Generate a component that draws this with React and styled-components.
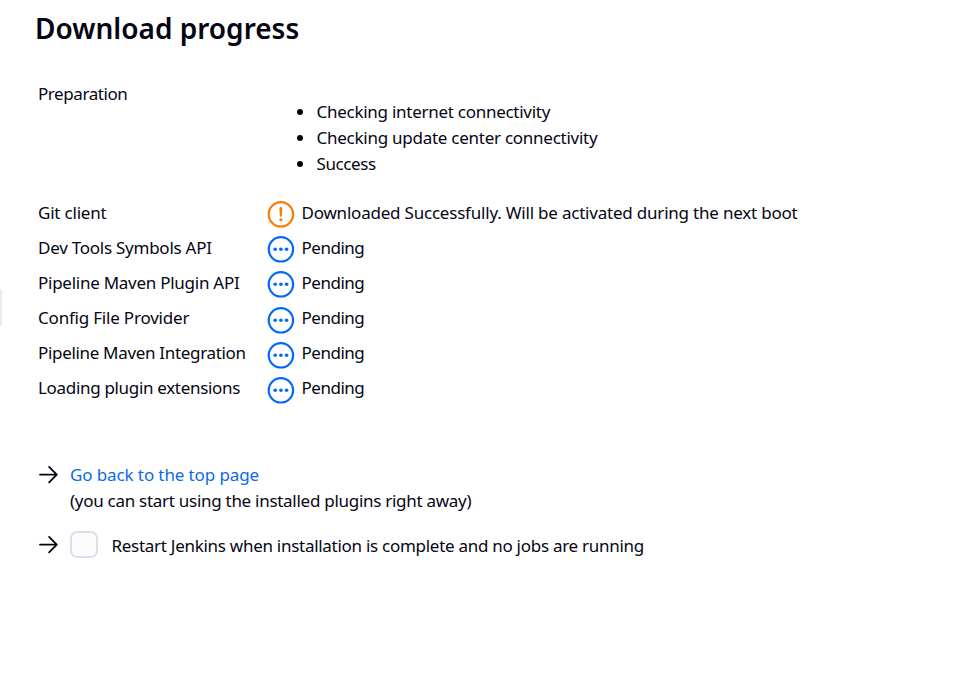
import React from "react";
import styled, { createGlobalStyle } from "styled-components";

const Global = createGlobalStyle`
  * { box-sizing: border-box; }
  body {
    margin: 0;
    background: #fff;
    color: #050514;
    font: 400 17px/26px "Noto Sans", "Open Sans", sans-serif;
    overflow: hidden;
  }
`;
const Page = styled.div`
  display: flex;
  height: 692px;
`;
const PanelEdge = styled.div`
  width: 2px;
  height: 37px;
  margin-top: 289px;
  background: #e7ebf2;
  border-radius: 0 2px 2px 0;
`;
const Main = styled.main`
  padding: 9px 0 0 33px;
`;
const Title = styled.h1`
  margin: 0 0 34px;
  font-size: 28px;
  line-height: 38px;
  font-weight: 600;
  white-space: nowrap;
`;
const Text = styled.span`
  white-space: nowrap;
  letter-spacing: ${(p) => p.$ls || 0}px;
`;
const Row = styled.div`
  display: grid;
  grid-template-columns: 229px auto;
  height: ${(p) => (p.$tall ? 119 : 35.1)}px;
  padding-left: 3px;
`;
const Steps = styled.ul`
  list-style: none;
  margin: 18px 0 0 29.5px;
  padding: 0;
`;
const Step = styled.li`
  display: flex;
  align-items: center;
  gap: 14px;
  height: 26px;
  &::before {
    content: "";
    width: 6px;
    height: 6px;
    border-radius: 50%;
    background: #050514;
  }
`;
const Status = styled.div`
  display: flex;
  gap: 6.5px;
`;
const StatusIcon = styled.svg`
  width: 28px;
  height: 28px;
  margin-top: 1.25px;
  flex: none;
  color: ${(p) => (p.$warn ? "#ff7800" : "#0068fa")};
`;
const Links = styled.div`
  margin-top: 51px;
  padding-left: 3px;
`;
const Item = styled.div`
  display: flex;
  margin-bottom: 18px;
`;
const Lines = styled.div`
  display: flex;
  flex-direction: column;
`;
const Link = styled.a`
  color: #0b6aee;
  text-decoration: none;
`;
const ArrowIcon = styled.svg`
  width: 22px;
  height: 22px;
  margin: 1.5px 10px 0 0;
  flex: none;
`;
const Option = styled.label`
  display: flex;
  align-items: flex-start;
  line-height: 28px;
`;
const Checkbox = styled.input`
  appearance: none;
  width: 28px;
  height: 27px;
  margin: -1px 13.5px 0 0;
  border: 2px solid #dadfeb;
  border-radius: 7px;
  background: #fcfcfd;
`;

const Arrow = () => (
  <ArrowIcon viewBox="0 0 22 22" fill="none" stroke="#050514" strokeWidth="1.8" strokeLinecap="round" strokeLinejoin="round">
    <path d="M2 11.6H18.6M11.1 3.9L18.8 11.6L11.1 19.3" />
  </ArrowIcon>
);

const Icon = ({ warn }) => (
  <StatusIcon $warn={warn} viewBox="0 0 28 28">
    <circle cx="13.9" cy="13.3" r="12.2" fill="none" stroke="currentColor" strokeWidth="2.2" />
    {warn ? (
      <g fill="currentColor">
        <path d="M12.4 7.5a1.45 1.45 0 0 1 2.9 0l-.4 7.2a1.05 1.05 0 0 1-2.1 0z" />
        <circle cx="13.85" cy="18.7" r="1.5" />
      </g>
    ) : (
      <g fill="currentColor">
        <circle cx="8.2" cy="13.3" r="1.8" />
        <circle cx="13.9" cy="13.3" r="1.8" />
        <circle cx="19.6" cy="13.3" r="1.8" />
      </g>
    )}
  </StatusIcon>
);

const steps = [
  ["Checking internet connectivity", -0.27],
  ["Checking update center connectivity", -0.26],
  ["Success", -0.4],
];
const plugins = [
  ["Git client", -0.2],
  ["Dev Tools Symbols API", -0.25],
  ["Pipeline Maven Plugin API", -0.26],
  ["Config File Provider", -0.2],
  ["Pipeline Maven Integration", -0.32],
  ["Loading plugin extensions", -0.32],
];

export default function App() {
  return (
    <>
      <Global />
      <Page>
        <PanelEdge />
        <Main>
          <Title><Text>Download progress</Text></Title>
          <Row $tall>
            <Text $ls={-0.43}>Preparation</Text>
            <Steps>
              {steps.map(([t, ls]) => <Step key={t}><Text $ls={ls}>{t}</Text></Step>)}
            </Steps>
          </Row>
          {plugins.map(([t, ls], i) => (
            <Row key={t}>
              <Text $ls={ls}>{t}</Text>
              <Status>
                <Icon warn={i === 0} />
                <Text $ls={i === 0 ? -0.21 : -0.48}>
                  {i === 0 ? "Downloaded Successfully. Will be activated during the next boot" : "Pending"}
                </Text>
              </Status>
            </Row>
          ))}
          <Links>
            <Item>
              <Arrow />
              <Lines>
                <Link href="#"><Text $ls={-0.11}>Go back to the top page</Text></Link>
                <Text $ls={-0.28}>(you can start using the installed plugins right away)</Text>
              </Lines>
            </Item>
            <Item>
              <Arrow />
              <Option>
                <Checkbox type="checkbox" />
                <Text $ls={-0.28}>Restart Jenkins when installation is complete and no jobs are running</Text>
              </Option>
            </Item>
          </Links>
        </Main>
      </Page>
    </>
  );
}
